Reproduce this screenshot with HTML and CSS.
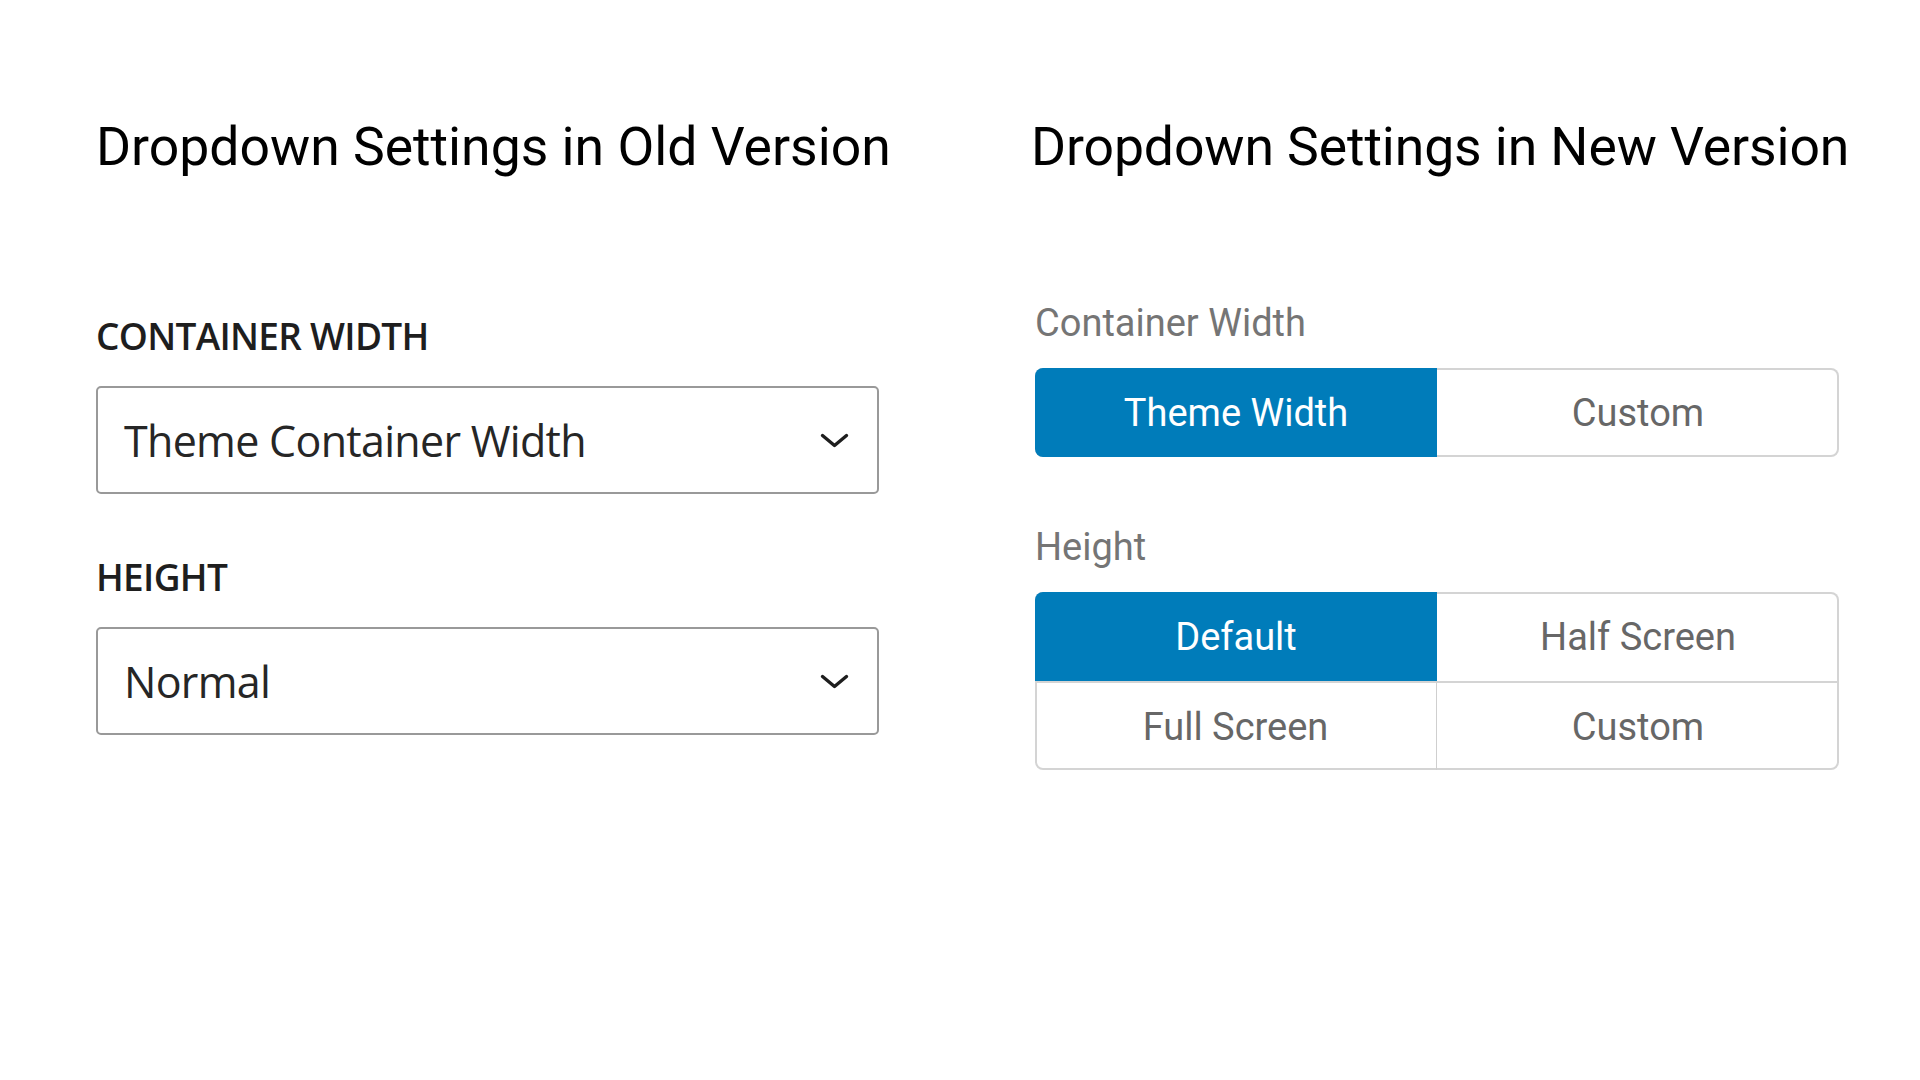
FILE: index.html
```html
<!DOCTYPE html>
<html lang="en">
<head>
  <meta charset="UTF-8" />
  <meta name="viewport" content="width=device-width, initial-scale=1.0" />
  <title>Dropdown Settings</title>
  <link rel="stylesheet" href="styles.css">
</head>
<body>

  <div class="compare">

    <!-- Old version: plain selects -->
    <section class="column old">
      <h1 class="title">Dropdown Settings in Old Version</h1>

      <div class="field">
        <label class="old-label">CONTAINER WIDTH</label>
        <div class="select">
          <span>Theme Container Width</span>
          <svg class="chevron" width="29" height="17" viewBox="0 0 29 17">
            <polyline points="2.5,3.5 14.5,13.5 26.5,3.5" fill="none" stroke="#1e1e1e" stroke-width="3.4" stroke-linecap="round" stroke-linejoin="round"/>
          </svg>
        </div>
      </div>

      <div class="field">
        <label class="old-label">HEIGHT</label>
        <div class="select">
          <span>Normal</span>
          <svg class="chevron" width="29" height="17" viewBox="0 0 29 17">
            <polyline points="2.5,3.5 14.5,13.5 26.5,3.5" fill="none" stroke="#1e1e1e" stroke-width="3.4" stroke-linecap="round" stroke-linejoin="round"/>
          </svg>
        </div>
      </div>
    </section>

    <!-- New version: button groups -->
    <section class="column new">
      <h1 class="title">Dropdown Settings in New Version</h1>

      <div class="field">
        <div class="new-label">Container Width</div>
        <div class="seg">
          <div class="seg-item active">Theme Width</div>
          <div class="seg-item">Custom</div>
        </div>
      </div>

      <div class="field">
        <div class="new-label">Height</div>
        <div class="seg seg-grid">
          <div class="seg-item active">Default</div>
          <div class="seg-item">Half Screen</div>
          <div class="seg-item">Full Screen</div>
          <div class="seg-item">Custom</div>
        </div>
      </div>
    </section>

  </div>

</body>
</html>
```

FILE: styles.css
```css
body {
  margin: 0;
  background: #fff;
  font-family: Roboto, Arial, sans-serif;
}

.compare {
  display: flex;
  gap: 156px;
  padding: 120px 0 0 96px;
}

.column {
  display: flex;
  flex-direction: column;
}

.old {
  width: 783px;
}

.new {
  width: 804px;
}

.title {
  margin: 0;
  font-family: Roboto, Arial, sans-serif;
  font-weight: 400;
  font-size: 53.5px;
  line-height: 54px;
  color: #000;
  white-space: nowrap;
}

.new .title {
  margin-left: -4px;
  letter-spacing: -0.1px;
}

/* Old version */
.old .field {
  display: flex;
  flex-direction: column;
}

.old .title {
  margin-bottom: 143px;
}

.old-label {
  font-family: "Open Sans", "Noto Sans", sans-serif;
  font-weight: 600;
  font-size: 37px;
  line-height: 38px;
  color: #1e1e1e;
  letter-spacing: -0.7px;
  margin-bottom: 31px;
}

.select {
  display: flex;
  align-items: center;
  justify-content: space-between;
  height: 104px;
  padding: 0 28px 0 26px;
  border: 2px solid #999;
  border-radius: 5px;
  font-family: "Open Sans", "Noto Sans", sans-serif;
  font-size: 43px;
  color: #262626;
  letter-spacing: -0.7px;
}

.old .field + .field {
  margin-top: 64px;
}

/* New version */
.new .title {
  margin-bottom: 129px;
}

.new-label {
  font-size: 38px;
  line-height: 40px;
  color: #757575;
  margin-bottom: 25px;
}

.new .field + .field {
  margin-top: 70px;
}

.seg {
  display: grid;
  grid-template-columns: 1fr 1fr;
  border-radius: 8px;
  overflow: hidden;
  box-shadow: inset 0 0 0 2px #d4d4d4;
}

.seg-item {
  display: flex;
  align-items: center;
  justify-content: center;
  height: 89px;
  font-size: 38px;
  color: #676767;
}

.seg-item.active {
  background: #007cba;
  color: #fff;
}

.seg-grid .seg-item:nth-child(n+3) {
  height: 87px;
  border-top: 2px solid #d4d4d4;
}

.seg-grid .seg-item:nth-child(3) {
  border-right: 1px solid #cfcfcf;
}
```
